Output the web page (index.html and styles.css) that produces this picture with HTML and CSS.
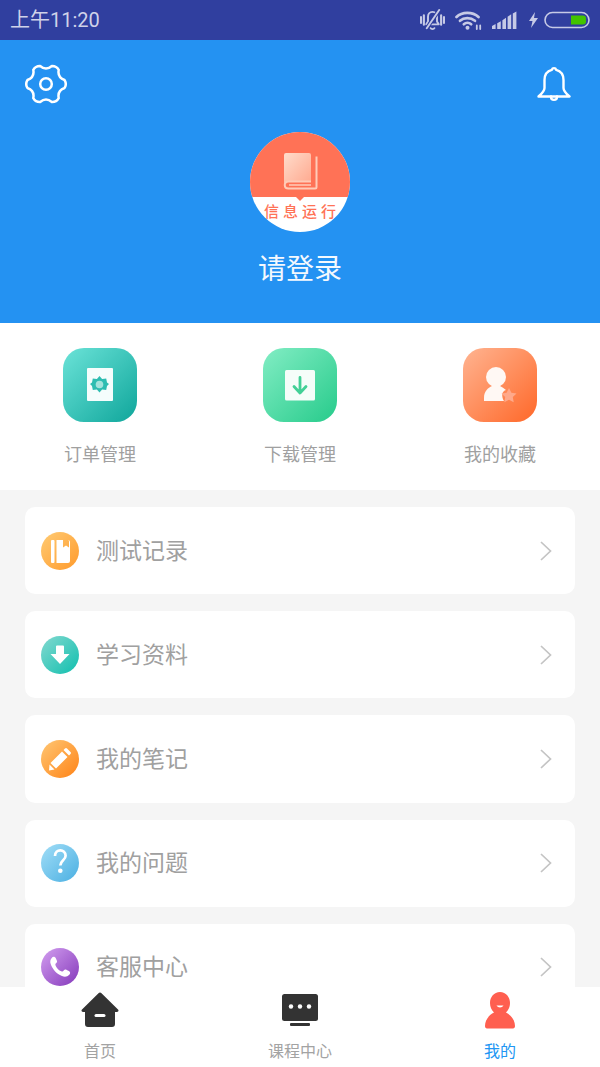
FILE: index.html
```html
<!DOCTYPE html>
<html lang="zh-CN">
<head>
<meta charset="utf-8">
<title>我的</title>
<link rel="stylesheet" href="styles.css">
</head>
<body>
<div class="app">
  <div class="status">
    <span class="time">上午11:20</span>
    <div class="status-icons">
      <svg class="si-mute" viewBox="0 0 26 24" fill="none" stroke="#c6cae6" stroke-width="2" stroke-linecap="round" stroke-linejoin="round"><path d="M13 3c-3 0-4.700 2.300-4.700 5v5l-1.800 3h13l-1.800-3V8c0-2.700-1.700-5-4.700-5z"/><path d="M11 20c.6 1.300 3.400 1.300 4 0"/><path d="M20 1 7 20" stroke="#303f9f" stroke-width="4"/><path d="M20 1 7 20"/><path d="M1 8.500v6M4 6.500v10M22 6.500v10M25 8.500v6" stroke-width="2.200"/></svg>
      <svg class="si-wifi" viewBox="0 0 27 20" fill="none" stroke="#c6cae6" stroke-width="2.700" stroke-linecap="round"><path d="M1.500 7C7 1.500 17.500 1.500 23.500 7"/><path d="M5 10.800c4-3.500 10.500-3.500 15 0"/><path d="M8.800 14.200c2-1.700 5.400-1.700 7.400 0"/><circle cx="12.500" cy="17.800" r="2" fill="#c6cae6" stroke="none"/><path d="M21.800 15.500v3.500M25.200 15.500v3.500" stroke-width="1.800"/></svg>
      <svg class="si-signal" viewBox="0 0 25 18" fill="#c6cae6"><path d="M0 15l3.600-2v5H0zM5.200 12.200l3.600-2V18H5.200zM10.400 9.300l3.600-2.600V18h-3.600zM15.600 5.800l3.600-2.600V18h-3.600zM20.800 2.400 24.400.500V18h-3.600z"/></svg>
      <svg class="si-bolt" viewBox="0 0 9 16" fill="#c6cae6"><path d="M6 0 0 9h3.500L2 16l7-10H5z"/></svg>
      <svg class="si-batt" viewBox="0 0 46 18"><rect x="1" y="1.500" width="44" height="15" rx="7.500" fill="none" stroke="#c6cae6" stroke-width="1.600"/><path d="M27 4.500h12a3 3 0 0 1 3 3v3a3 3 0 0 1-3 3H27z" fill="#43c400"/></svg>
    </div>
  </div>

  <header class="hero">
    <div class="hero-top">
      <svg class="gear" viewBox="-1 -1 42 42" fill="none" stroke="#fff" stroke-width="2.500" stroke-linejoin="round"><path d="M38.580 16.050Q31.260 13.500 32.710 5.880Q30.500 1.810 25.870 1.930Q20 7 14.130 1.930Q9.500 1.810 7.290 5.880Q8.740 13.500 1.420 16.050Q-1 20 1.420 23.950Q8.740 26.500 7.290 34.120Q9.500 38.190 14.130 38.070Q20 33 25.870 38.070Q30.500 38.190 32.710 34.120Q31.260 26.500 38.580 23.950Q41 20 38.580 16.050Z"/><circle cx="20" cy="20" r="5.800"/></svg>
      <svg class="bell" viewBox="0 0 34 36" fill="none" stroke="#fff" stroke-width="2.400" stroke-linejoin="round" stroke-linecap="round"><path d="M14.800 3.800a2.300 2.300 0 0 1 4.400 0C24.800 5.300 26.500 9 26.500 14v8c0 3.500 3 6 6 8.500h-31c3-2.500 6-5 6-8.500v-8c0-5 1.700-8.700 7.300-10.200z"/><path d="M14 30.500c0 4.500 6 4.500 6 0"/></svg>
    </div>
    <div class="avatar">
      <div class="avatar-top">
        <svg class="book" viewBox="0 0 36 38" fill="none"><defs><linearGradient id="bk" x1="0" y1="0" x2="1" y2="1"><stop offset="0" stop-color="#ffdccb"/><stop offset="1" stop-color="#ffa98f"/></linearGradient></defs><path d="M3 1h23a2 2 0 0 1 2 2v26H6c-2 0-4 1-5 2.500V3a2 2 0 0 1 2-2z" fill="url(#bk)"/><path d="M33.500 4.500V35a1.500 1.500 0 0 1-1.500 1.500H5.500c-5 0-5-7 0-7H28" stroke="#ffcbb8" stroke-width="2"/><path d="M6 33h22" stroke="#ffb6a0" stroke-width="2"/></svg>
      </div>
      <div class="avatar-band">信息运行</div>
      <span class="avatar-notch"></span>
    </div>
    <div class="login">请登录</div>
  </header>

  <section class="actions">
    <div class="action">
      <div class="tile tile-teal">
        <svg class="tile-svg" viewBox="0 0 74 74"><rect x="24" y="20" width="26" height="33" rx="1" fill="#f5fdfc"/><path d="M36.500 28l2.600 3 4.100-.5.800 3.900 2 1.600-2 2-.8 3.900-4.100-.5-2.600 3-2.600-3-4.100.5-.8-3.900-2-2 2-1.600.8-3.900 4.100.5z" fill="#2ebdb1"/><circle cx="36.500" cy="36.500" r="3.800" fill="#a4e3dc"/></svg>
      </div>
      <span class="action-label">订单管理</span>
    </div>
    <div class="action">
      <div class="tile tile-green">
        <svg class="tile-svg" viewBox="0 0 74 74"><rect x="22" y="22" width="30" height="30.500" rx="1.500" fill="#f5fdf9"/><path d="M37 29.500v15M31 38.500 37 45l6-6.500" fill="none" stroke="#42d096" stroke-width="2.800" stroke-linecap="round" stroke-linejoin="round"/></svg>
      </div>
      <span class="action-label">下载管理</span>
    </div>
    <div class="action">
      <div class="tile tile-orange">
        <svg class="tile-svg" viewBox="0 0 74 74"><circle cx="33" cy="29" r="10" fill="#fff8f4"/><path d="M21 53v-3c0-7 4-10 8-12l8 0c2 1 4 2.500 6 4-4 1-5 6-2 11z" fill="#fff8f4"/><path d="m46 40 2.400 4.800 5.100.7-3.700 3.600.9 5.100-4.700-2.400-4.700 2.400.9-5.100-3.700-3.600 5.100-.7z" fill="#ffa98a"/></svg>
      </div>
      <span class="action-label">我的收藏</span>
    </div>
  </section>

  <main class="list">
    <div class="row">
      <svg class="row-icon" viewBox="0 0 38 38"><defs><linearGradient id="g1" x1="0" y1="0" x2="1" y2="1"><stop offset="0" stop-color="#ffcb74"/><stop offset="1" stop-color="#ff9a2b"/></linearGradient></defs><circle cx="19" cy="19" r="19" fill="url(#g1)"/><rect x="10" y="8" width="3.500" height="23" rx="1" fill="#fff"/><path d="M15.500 8H27a2 2 0 0 1 2 2v19a2 2 0 0 1-2 2H15.500zM22 8v7.500l3-2 3 2V8z" fill="#fff" fill-rule="evenodd"/></svg>
      <span class="row-text">测试记录</span>
      <svg class="chev" viewBox="0 0 12 20" fill="none" stroke="#c4c4c4" stroke-width="1.700"><path d="m1 1 9.500 9L1 19"/></svg>
    </div>
    <div class="row">
      <svg class="row-icon" viewBox="0 0 38 38"><defs><linearGradient id="g2" x1="0" y1="0" x2="1" y2="1"><stop offset="0" stop-color="#84d9d0"/><stop offset="1" stop-color="#0fbfae"/></linearGradient></defs><circle cx="19" cy="19" r="19" fill="url(#g2)"/><path d="M15 10.500a1 1 0 0 1 1-1h6a1 1 0 0 1 1 1V18h5.500L19 28 9.500 18H15z" fill="#fff"/></svg>
      <span class="row-text">学习资料</span>
      <svg class="chev" viewBox="0 0 12 20" fill="none" stroke="#c4c4c4" stroke-width="1.700"><path d="m1 1 9.500 9L1 19"/></svg>
    </div>
    <div class="row">
      <svg class="row-icon" viewBox="0 0 38 38"><defs><linearGradient id="g3" x1="0" y1="0" x2="1" y2="1"><stop offset="0" stop-color="#ffc774"/><stop offset="1" stop-color="#ff8316"/></linearGradient></defs><circle cx="19" cy="19" r="19" fill="url(#g3)"/><path d="M24 8.500a1.500 1.500 0 0 1 2 0l3.500 3.500a1.500 1.500 0 0 1 0 2l-1.500 1.500-5.500-5.500zM21 11.500l5.500 5.500L15 28.500 9.500 23zM8.500 24.500l5 5L8 30.500z" fill="#fff"/></svg>
      <span class="row-text">我的笔记</span>
      <svg class="chev" viewBox="0 0 12 20" fill="none" stroke="#c4c4c4" stroke-width="1.700"><path d="m1 1 9.500 9L1 19"/></svg>
    </div>
    <div class="row">
      <svg class="row-icon" viewBox="0 0 38 38"><defs><linearGradient id="g4" x1="0" y1="0" x2="1" y2="1"><stop offset="0" stop-color="#a2def7"/><stop offset="1" stop-color="#4aafe2"/></linearGradient></defs><circle cx="19" cy="19" r="19" fill="url(#g4)"/><path d="M14 12c0-7.500 10.600-7.500 10.600-.3 0 4.500-5.300 4.500-5.300 9.800" fill="none" stroke="#fff" stroke-width="2.700"/><circle cx="19.300" cy="26.800" r="2.300" fill="#fff"/></svg>
      <span class="row-text">我的问题</span>
      <svg class="chev" viewBox="0 0 12 20" fill="none" stroke="#c4c4c4" stroke-width="1.700"><path d="m1 1 9.500 9L1 19"/></svg>
    </div>
    <div class="row">
      <svg class="row-icon" viewBox="0 0 38 38"><defs><linearGradient id="g5" x1="0" y1="0" x2="1" y2="1"><stop offset="0" stop-color="#d39ff0"/><stop offset="1" stop-color="#8438ba"/></linearGradient></defs><circle cx="19" cy="19" r="19" fill="url(#g5)"/><path d="M11 9.500c1.500-1.200 3-.8 3.800.8l1 2.200c.5 1.200.2 2-.8 2.800-.8.700-.8 1.500-.2 2.700 1.200 2.500 3 4.300 5.500 5.300 1 .4 1.800.2 2.400-.7.800-1.100 1.800-1.300 3-.7l2.200 1.200c1.500.9 1.600 2.500.4 3.700-2 2-4.700 2.300-7.300 1.200-5.500-2.300-9.500-6.500-11.300-12-.9-2.700-.3-4.800 1.300-6.300z" fill="#fff"/></svg>
      <span class="row-text">客服中心</span>
      <svg class="chev" viewBox="0 0 12 20" fill="none" stroke="#c4c4c4" stroke-width="1.700"><path d="m1 1 9.500 9L1 19"/></svg>
    </div>
  </main>

  <nav class="tabs">
    <div class="tab">
      <svg class="tab-icon" viewBox="0 0 40 40"><path d="M20 .5c.6 0 1 .2 1.500.7L38 17.500c1 1 .4 2.400-1 2.400h-2V32a3 3 0 0 1-3 3H8a3 3 0 0 1-3-3V19.900H3c-1.400 0-2-1.400-1-2.400L18.500 1.200c.5-.5.900-.7 1.500-.7z" fill="#333"/><rect x="14.500" y="22" width="11" height="3" rx="1.500" fill="#fff"/></svg>
      <span class="tab-label">首页</span>
    </div>
    <div class="tab">
      <svg class="tab-icon" viewBox="0 0 40 40"><rect x="2" y="2" width="36" height="27" rx="2.500" fill="#333"/><circle cx="11" cy="14.500" r="2.200" fill="#fff"/><circle cx="20" cy="14.500" r="2.200" fill="#fff"/><circle cx="29" cy="14.500" r="2.200" fill="#fff"/><rect x="10" y="31" width="20" height="3" rx="1" fill="#333"/></svg>
      <span class="tab-label">课程中心</span>
    </div>
    <div class="tab">
      <svg class="tab-icon" viewBox="0 0 40 40"><path d="M20 0c6 0 10 5 10 11 0 4-1.500 7-4 9.500C31 23 35 28 35 34c0 1.500-.7 2.500-2 2.500H7c-1.300 0-2-1-2-2.500 0-6 4-11 9-13.500-2.500-2.500-4-5.500-4-9.500C10 5 14 0 20 0z" fill="#ff5f50"/><path d="M16.500 13.500c1.500 2.500 5.500 2.500 7 0z" fill="#fff"/></svg>
      <span class="tab-label tab-label-on">我的</span>
    </div>
  </nav>
</div>
</body>
</html>
```
FILE: styles.css
```css
* { box-sizing: border-box; }
html, body { margin: 0; padding: 0; }
body {
  font-family: "Noto Sans CJK SC", "Noto Sans", sans-serif;
  background: #f5f5f5;
}
.app {
  width: 600px;
  height: 1067px;
  display: flex;
  flex-direction: column;
  overflow: hidden;
  background: #f5f5f5;
}
.status {
  height: 40px;
  flex: none;
  background: #303f9f;
  display: flex;
  align-items: center;
  justify-content: space-between;
  padding: 0 10px;
}
.time {
  font-family: Roboto, "Noto Sans CJK SC", sans-serif;
  font-size: 20px;
  line-height: 42px;
  color: #cfd2e9;
}
.status-icons { display: flex; align-items: center; }
.si-mute { width: 25px; height: 23px; margin-right: 10px; }
.si-wifi { width: 27px; height: 20px; margin-right: 10px; }
.si-signal { width: 25px; height: 18px; margin-right: 12px; }
.si-bolt { width: 9px; height: 16px; margin-right: 6px; }
.si-batt { width: 46px; height: 18px; }

.hero {
  height: 283px;
  flex: none;
  background: #2492f2;
  display: flex;
  flex-direction: column;
  align-items: center;
}
.hero-top {
  width: 100%;
  height: 92px;
  padding: 23px 29px 0 25px;
  display: flex;
  justify-content: space-between;
  align-items: flex-start;
}
.gear { width: 42px; height: 42px; }
.bell { width: 34px; height: 36px; margin-top: 3px; }
.avatar {
  position: relative;
  width: 100px;
  height: 100px;
  border-radius: 50%;
  overflow: hidden;
  background: #fff;
  display: flex;
  flex-direction: column;
}
.avatar-top {
  height: 65px;
  background: #ff7256;
  display: flex;
  justify-content: center;
  padding-top: 20px;
  padding-left: 1px;
}
.book { width: 36px; height: 38px; }
.avatar-band {
  text-align: center;
  font-size: 15px;
  font-weight: 500;
  line-height: 18px;
  letter-spacing: 4px;
  padding-left: 4px;
  margin-top: 5px;
  color: #ff7256;
  white-space: nowrap;
}
.avatar-notch {
  position: absolute;
  left: 46px;
  top: 65px;
  width: 0;
  height: 0;
  border-left: 4px solid transparent;
  border-right: 4px solid transparent;
  border-top: 4px solid #ff7256;
}
.login {
  margin-top: 12px;
  font-size: 28px;
  line-height: 46px;
  color: #f4f9fe;
}

.actions {
  height: 167px;
  flex: none;
  background: #fff;
  display: grid;
  grid-template-columns: repeat(3, 200px);
  padding-top: 25px;
}
.action {
  display: flex;
  flex-direction: column;
  align-items: center;
}
.tile {
  width: 74px;
  height: 74px;
  border-radius: 21px;
}
.tile-svg { display: block; width: 74px; height: 74px; }
.tile-teal { background: linear-gradient(135deg, #6be3d8, #0fa69b); }
.tile-green { background: linear-gradient(135deg, #82edc4, #27cb8b); }
.tile-orange { background: linear-gradient(135deg, #ffb491, #ff6829); }
.action-label {
  margin-top: 18px;
  font-size: 18px;
  line-height: 27px;
  color: #a0a0a0;
}

.list {
  flex: 1;
  min-height: 0;
  overflow: hidden;
  padding: 17px 25px 0;
  display: flex;
  flex-direction: column;
  gap: 17px;
}
.row {
  flex: none;
  height: 87.200px;
  background: #fff;
  border-radius: 10px;
  display: flex;
  align-items: center;
  padding: 0 23px 0 16px;
}
.row-icon { width: 38px; height: 38px; flex: none; }
.row-text {
  flex: 1;
  margin: 0 0 4px 17px;
  font-size: 23px;
  line-height: 34px;
  color: #a0a0a0;
}
.chev { width: 12px; height: 20px; flex: none; }

.tabs {
  height: 80px;
  flex: none;
  background: #fff;
  display: grid;
  grid-template-columns: repeat(3, 200px);
}
.tab {
  display: flex;
  flex-direction: column;
  align-items: center;
  padding-top: 5px;
}
.tab-icon { width: 40px; height: 40px; display: block; }
.tab-label {
  margin-top: 6px;
  font-size: 16px;
  line-height: 24px;
  color: #a3a3a3;
}
.tab-label-on { color: #2196f3; }
```
